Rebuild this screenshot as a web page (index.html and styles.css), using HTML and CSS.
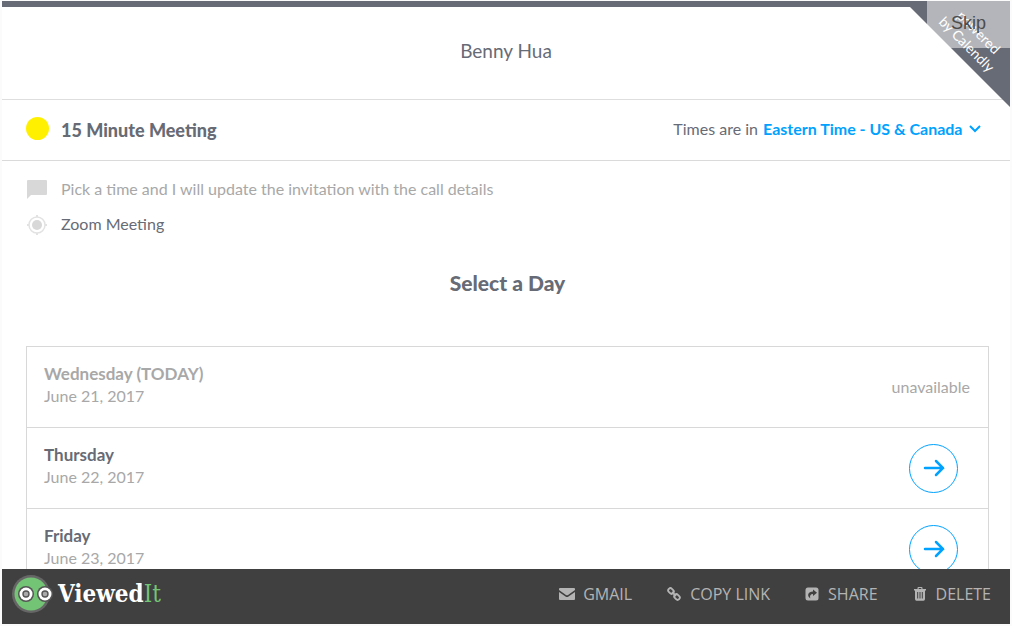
FILE: index.html
```html
<!DOCTYPE html>
<html lang="en">
<head>
<meta charset="utf-8">
<title>15 Minute Meeting - Benny Hua</title>
<link rel="stylesheet" href="styles.css">
</head>
<body>
<div class="frame">
  <div class="page">
    <div class="band"></div>
    <header class="host">Benny Hua</header>

    <section class="event">
      <span class="event-dot"></span>
      <h1 class="event-title">15 Minute Meeting</h1>
      <div class="zone">
        <label for="zone">Times are in</label>
        <select id="zone" class="zone-select">
          <option>Eastern Time - US &amp; Canada</option>
        </select>
        <svg class="zone-caret" viewBox="0 0 14 8" aria-hidden="true"><path d="M2 1l5 5 5-5"/></svg>
      </div>
    </section>

    <main class="details">
      <p class="detail detail-muted">
        <svg class="detail-icon" viewBox="0 0 22 22" aria-hidden="true"><path fill="#d8d8d8" d="M2 2h18q1 0 1 1v13q0 1-1 1H5l-4 4V3q0-1 1-1z"/></svg>
        Pick a time and I will update the invitation with the call details
      </p>
      <p class="detail">
        <svg class="detail-icon" viewBox="0 0 22 22" aria-hidden="true"><circle cx="11" cy="12" r="8" fill="none" stroke="#e2e2e2" stroke-width="1.5"/><circle cx="11" cy="12" r="5" fill="#d8d8d8"/><path d="M11 2v2M11 20v2M1 12h2M19 12h2" stroke="#e2e2e2" stroke-width="2"/></svg>
        Zoom Meeting
      </p>

      <h2 class="pick">Select a Day</h2>

      <ul class="days">
        <li class="day day-off">
          <div><strong class="day-name">Wednesday (TODAY)</strong><span class="day-date">June 21, 2017</span></div>
          <span class="day-status">unavailable</span>
        </li>
        <li class="day">
          <div><strong class="day-name">Thursday</strong><span class="day-date">June 22, 2017</span></div>
          <button class="go" aria-label="Choose Thursday"><svg viewBox="0 0 22 20" aria-hidden="true"><path d="M2 10h18M13 3l7 7-7 7"/></svg></button>
        </li>
        <li class="day">
          <div><strong class="day-name">Friday</strong><span class="day-date">June 23, 2017</span></div>
          <button class="go" aria-label="Choose Friday"><svg viewBox="0 0 22 20" aria-hidden="true"><path d="M2 10h18M13 3l7 7-7 7"/></svg></button>
        </li>
      </ul>
    </main>

    <div class="ribbon">
      <svg class="ribbon-shape" viewBox="0 0 106 106" aria-hidden="true"><path fill="#676b75" d="M0 0h106v106z"/></svg>
      <a class="ribbon-text" href="#">powered<br>by Calendly</a>
    </div>
    <button class="skip">Skip</button>
  </div>

  <footer class="bar">
    <a class="brand" href="#">
      <svg class="brand-mark" viewBox="0 0 42 40" aria-hidden="true">
        <circle cx="19" cy="20" r="19" fill="#666"/>
        <circle cx="19" cy="20" r="16.500" fill="#74c476"/>
        <circle cx="14" cy="20" r="8" fill="#555"/><circle cx="33" cy="20" r="8" fill="#555"/>
        <circle cx="14" cy="20" r="6.5" fill="#fff"/><circle cx="33" cy="20" r="6.5" fill="#fff"/>
        <circle cx="14" cy="20" r="3" fill="#aaa" stroke="#555" stroke-width="1.4"/><circle cx="33" cy="20" r="3" fill="#aaa" stroke="#555" stroke-width="1.4"/>
      </svg>
      <span class="brand-name">Viewed<span class="brand-it">It</span></span>
    </a>
    <nav class="actions">
      <button class="action"><svg class="action-icon" viewBox="0 0 16 14" aria-hidden="true"><path fill="currentColor" d="M1 1h14q1 0 1 1v1L9 8q-1 .7-2 0L0 3V2q0-1 1-1zM0 5l6.500 4.500q1.500 1 3 0L16 5v7q0 1-1 1H1q-1 0-1-1z"/></svg>GMAIL</button>
      <button class="action"><svg class="action-icon" viewBox="0 0 16 14" aria-hidden="true"><g fill="none" stroke="currentColor" stroke-width="1.800"><rect x="-3" y="-2.200" width="6" height="4.400" rx="2.100" transform="translate(5 4) rotate(45)"/><rect x="-3" y="-2.200" width="6" height="4.400" rx="2.100" transform="translate(11 10) rotate(45)"/><path d="M6 5l4 4"/></g></svg>COPY LINK</button>
      <button class="action"><svg class="action-icon" viewBox="0 0 16 14" aria-hidden="true"><rect x="1.500" y=".5" width="13" height="13" rx="2.500" fill="currentColor"/><path fill="#404040" d="M9 2.500l4 3.200-4 3.300V7C6.500 7 5.500 8.500 6.300 11.500 2.500 8.500 4 4.500 9 4.500z"/></svg>SHARE</button>
      <button class="action"><svg class="action-icon" viewBox="0 0 16 14" aria-hidden="true"><path fill="currentColor" d="M5.500 1q0-1 1-1h3q1 0 1 1v1H14v1.500h-1V12q0 1.700-1.500 1.700h-7Q3 13.700 3 12V3.500H2V2h3.500zM6.700 1v1h2.600V1z"/><path d="M5.700 5v6.500M8 5v6.500M10.300 5v6.500" stroke="#404040"/></svg>DELETE</button>
    </nav>
  </footer>
</div>
</body>
</html>
```
FILE: styles.css
```css
* {
  box-sizing: border-box;
}

body {
  margin: 0;
  background: #fbfbfb;
  color: #676b75;
  font: 16px/22px Lato, "Open Sans", sans-serif;
}

button,
select {
  margin: 0;
  padding: 0;
  border: 0;
  background: none;
  font: inherit;
  cursor: pointer;
}

a {
  text-decoration: none;
}

.frame {
  display: flex;
  flex-direction: column;
  height: 100vh;
  padding: 1px 2px 2px;
}

.page {
  position: relative;
  flex: 1;
  min-height: 0;
  overflow: hidden;
  background: #fff;
}

.band {
  height: 6px;
  background: #676b75;
}

.host {
  padding: 33px 0 37px;
  border-bottom: 1px solid #dedede;
  font-size: 19px;
  text-align: center;
}

.event {
  display: flex;
  align-items: center;
  gap: 12px;
  height: 61px;
  padding: 0 28px 3px 24px;
  border-bottom: 1px solid #dadada;
}

.event-dot {
  width: 23px;
  height: 23px;
  border-radius: 50%;
  background: #fff000;
}

.event-title {
  margin: 0;
  padding-top: 3px;
  font-size: 18px;
  font-weight: 900;
}

.zone {
  display: flex;
  align-items: center;
  gap: 5px;
  margin-left: auto;
}

.zone-select {
  appearance: none;
  color: #00a2ff;
  font-weight: 700;
}

.zone-caret {
  width: 14px;
  height: 8px;
  fill: none;
  stroke: #00a2ff;
  stroke-width: 2;
}

.details {
  padding: 17px 21px 0 24px;
}

.detail {
  display: flex;
  align-items: center;
  gap: 13px;
  margin: 0 0 13px;
}

.detail-muted {
  color: #a8a8a8;
}

.detail-icon {
  width: 22px;
  height: 22px;
}

.pick {
  margin: 36px 0 51px;
  font-size: 21px;
  line-height: 24px;
  font-weight: 900;
  text-align: center;
}

.days {
  margin: 0;
  padding: 0;
  border: 1px solid #d8d8d8;
  list-style: none;
}

.day {
  display: flex;
  align-items: center;
  justify-content: space-between;
  padding: 15px 30px 15px 17px;
  border-bottom: 1px solid #d8d8d8;
}

.day-name {
  display: block;
  padding-top: 1px;
  font-size: 17px;
  font-weight: 700;
}

.day-date {
  display: block;
  padding-bottom: 5px;
  color: #a8a8a8;
}

.day-off {
  padding-right: 18px;
  color: #a8a8a8;
}

.go {
  display: grid;
  place-items: center;
  width: 49px;
  height: 49px;
  border: 1px solid #00a2ff;
  border-radius: 50%;
}

.go svg {
  width: 22px;
  height: 20px;
  fill: none;
  stroke: #00a2ff;
  stroke-width: 2.5;
  stroke-linecap: round;
}

.ribbon {
  position: absolute;
  top: 0;
  right: 0;
  width: 106px;
  height: 106px;
}

.ribbon-shape {
  display: block;
  width: 100%;
}

.ribbon-text {
  position: absolute;
  top: 20px;
  right: -8px;
  width: 90px;
  color: #fff;
  font-size: 14px;
  line-height: 17px;
  text-align: center;
  transform: rotate(45deg);
}

.skip {
  position: absolute;
  top: 0;
  right: 0;
  width: 83px;
  height: 47px;
  padding-bottom: 4px;
  background: rgba(255, 255, 255, 0.5);
  color: #4c4c4c;
  font: 18px/20px "Liberation Sans", Arial, sans-serif;
}

.bar {
  display: flex;
  align-items: center;
  justify-content: space-between;
  height: 55px;
  padding: 0 19px 5px 10px;
  background: #404040;
}

.brand {
  display: flex;
  align-items: center;
  gap: 4px;
}

.brand-mark {
  width: 42px;
  height: 40px;
}

.brand-name {
  color: #fff;
  font: 700 24px/28px "DejaVu Serif Condensed", "DejaVu Serif", serif;
}

.brand-it {
  color: #74c476;
  font-weight: 400;
}

.actions {
  display: flex;
  gap: 34px;
}

.action {
  display: flex;
  align-items: center;
  gap: 8px;
  color: #b4b4b4;
  font-family: "Open Sans", sans-serif;
}

.action-icon {
  width: 16px;
  height: 14px;
}
```
